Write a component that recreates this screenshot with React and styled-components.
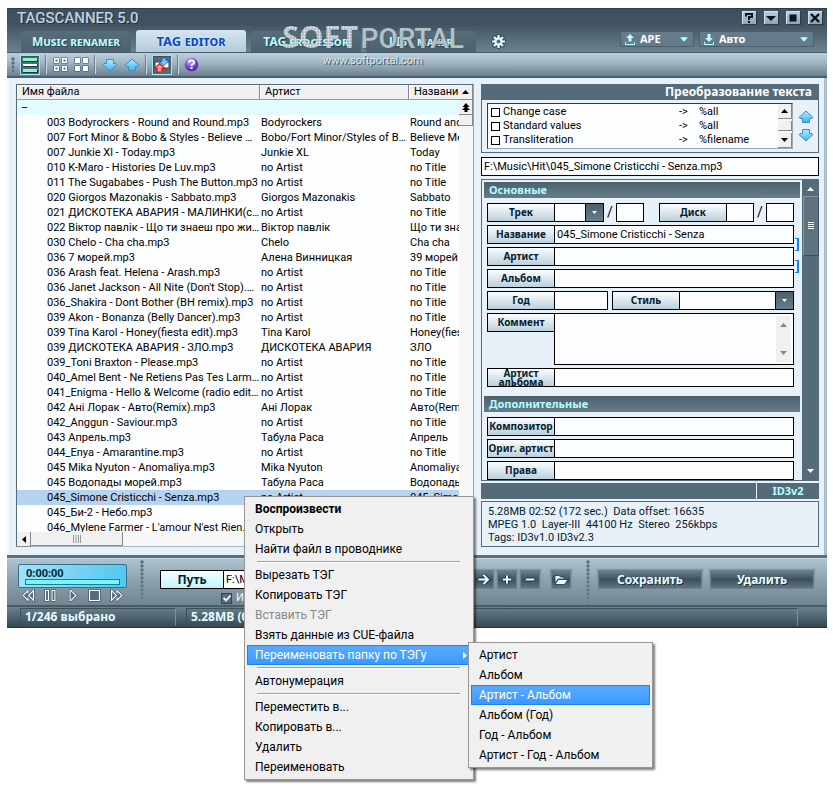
import styled, { createGlobalStyle, css } from 'styled-components'

const uiFont = '"Roboto", "Noto Sans", sans-serif';
const capsFont = '"Noto Sans", "Open Sans", sans-serif';

const slate = '#566b79';
const ice = '#b5ffff';
const paper = '#fbfdff';
const pale = '#e8f0f8';

const GlobalStyle = createGlobalStyle`
  *, *::before, *::after { box-sizing: border-box; }
  body {
    margin: 0;
    background: #fff;
    font-family: ${uiFont};
    font-size: 11px;
    color: #000;
  }
  button, input, select, textarea {
    font: inherit;
    color: inherit;
    margin: 0;
    padding: 0;
    border: none;
    border-radius: 0;
    background: none;
    outline: none;
    appearance: none;
    min-width: 0;
  }
  button { cursor: pointer; }
  svg { display: block; }
`;

const Page = styled.div`
  padding: 8px 6px 0 7px;
  min-height: 793px;
`;

const Window = styled.div`
  position: relative;
  background: ${pale};
`;

/* ---------- title bar and tabs ---------- */

const TitleBar = styled.header`
  display: flex;
  justify-content: space-between;
  height: 45px;
  background: linear-gradient(#3b505d 0, #40535f 35%, #6d8290 100%);
  border-top: 1px solid #2c3c48;
  border-bottom: 1px solid #495d6a;
  padding-left: 11px;
  padding-right: 5px;
`;

const TitleLeft = styled.div`
  display: flex;
  flex-direction: column;
  justify-content: space-between;
`;

const AppName = styled.h1`
  margin: 1px 0 0 -1px;
  font: 500 15px/16px ${uiFont};
  color: #c3d0d9;
  text-shadow: 1px 1px 0 #22323d;
  white-space: nowrap;
`;

const Tabs = styled.nav`
  display: flex;
  align-items: flex-end;
  gap: 5px;
  padding-left: 3px;
`;

const Tab = styled.button`
  width: 110px;
  height: 21px;
  border-radius: 3px 3px 0 0;
  background: linear-gradient(#576c79, #4d616e);
  color: ${ice};
  font: bold 12px/20px ${capsFont};
  font-variant: small-caps;
  text-shadow: 1px 1px 1px #2c3d49;
  white-space: nowrap;

  ${({ $active }) => $active && css`
    height: 22px;
    background: linear-gradient(#d5e5f0, #b4cbd9);
    color: #0a47cf;
    font-size: 13px;
    text-shadow: 0 0 2px #fff;
  `}
`;

const GearButton = styled.button`
  margin: 0 0 3px 10px;
`;

const TitleRight = styled.div`
  display: flex;
  flex-direction: column;
  align-items: flex-end;
`;

const WindowButtons = styled.div`
  display: flex;
  gap: 8px;
  padding-top: 2px;
  margin-bottom: 7px;
`;

const WindowButton = styled.button`
  width: 14px;
  height: 13px;
  display: grid;
  place-items: center;
  background: linear-gradient(#bccdd8, #8fa5b3);
  box-shadow: 1px 1px 1px #2c3c48, inset 1px 1px 0 #d5e1e9;
`;

const FormatPickers = styled.div`
  display: flex;
  gap: 5px;
  margin-right: 8px;
`;

const FormatPicker = styled.label`
  display: flex;
  align-items: center;
  width: ${({ $width }) => $width}px;
  height: 16px;
  padding: 0 5px 0 4px;
  gap: 5px;
  border: 1px solid #4b5f6c;
  border-radius: 2px;
  background: #657b89;
  color: #fff;
  font: bold 11px/14px ${capsFont};
  text-shadow: 1px 1px 0 #364853;

  select {
    flex: 1;
    height: 14px;
  }
  option { color: #000; }
`;

/* ---------- watermark over the tabs ---------- */

const Watermark = styled.div`
  position: absolute;
  left: 275px;
  top: 9px;
  pointer-events: none;
  color: #b2c0c8;
  text-align: center;
`;

const WatermarkName = styled.div`
  display: flex;
  align-items: baseline;
  gap: 2px;
  font: 500 28px/38px ${uiFont};
  text-shadow: 1px 1px 1px #51636f;
`;

const DottedWord = styled.span`
  font: 700 31px/38px ${capsFont};
  color: transparent;
  text-shadow: none;
  background: radial-gradient(circle at center, #cfd9df 0 1px, #7b8d98 2px) 0 0 / 3px 3px;
  background-clip: text;
`;

const WatermarkUrl = styled.div`
  font: 11px/12px ${uiFont};
  color: #dde6ec;
  text-shadow: 1px 1px 0 #44555f;
  margin-top: -3px;
`;

/* ---------- toolbar ---------- */

const Toolbar = styled.div`
  display: flex;
  align-items: center;
  height: 25px;
  padding-left: 4px;
  gap: 5px;
  background: linear-gradient(#b9cfdc, #a3b8c5 40%, #6b818f);
  border-bottom: 2px solid #4a5e6b;
`;

const Grip = styled.span`
  width: 4px;
  align-self: stretch;
  margin: ${({ $inset }) => $inset};
  background: radial-gradient(circle at 2px 2px, #5e7280 1px, #8ba0ae 2px, transparent 2px) 0 0 / 4px 4px;
`;

const ToolButton = styled.button`
  width: ${({ $width }) => $width || 20}px;
  height: 20px;
  display: grid;
  place-items: center;

  ${({ $active }) => $active && css`
    background: ${slate};
    border: 1px solid #9fe7f7;
    box-shadow: inset 1px 1px 1px #3c4f5b;
  `}
`;

const ToolDivider = styled.span`
  width: 2px;
  height: 19px;
  background: #667c8a;
  border-right: 1px solid #c9dce7;
`;

/* ---------- main area ---------- */

const Main = styled.main`
  display: grid;
  grid-template-columns: minmax(0, 1fr) 338px;
  gap: 7px;
  padding: 6px 8px 8px 9px;
  background: ${pale};
  box-shadow: inset -3px 0 0 #a9bfcd, inset 2px 0 0 #f5faff;
`;

const ListPane = styled.section`
  border: 1px solid ${slate};
  border-right-color: #90a8b8;
  border-bottom-color: #a5b9c6;
  background: ${paper};
`;

const ListBody = styled.div`
  display: flex;
  height: 447px;
  overflow: hidden;
`;

const FileTable = styled.table`
  flex: 1;
  min-width: 0;
  width: 100%;
  align-self: flex-start;
  table-layout: fixed;
  border-collapse: separate;
  border-spacing: 0;
  font: 11px/14px ${uiFont};

  th {
    height: 15px;
    padding: 0 0 0 5px;
    background: #f0f0f0;
    border-right: 1px solid #888;
    border-bottom: 1px solid #999;
    box-shadow: inset 1px 1px 0 #fff;
    font-weight: 400;
    text-align: left;
    white-space: nowrap;
    overflow: hidden;
  }
  th:last-child { border-right: none; }

  td {
    height: 15px;
    padding: 1px 1px 0;
    white-space: nowrap;
    overflow: hidden;
    text-overflow: ellipsis;
  }
  td:first-child { padding-left: 30px; padding-right: 0; }
  td:last-child { text-overflow: clip; padding-right: 0; }
`;

const GroupRow = styled.tr`
  background: #e3fbff;

  td:first-child { padding-left: 4px; }
`;

const FileRow = styled.tr`
  background: ${({ $selected }) => ($selected ? '#b5d2ef' : paper)};
`;

const checker = 'repeating-conic-gradient(#f0f0f0 0 25%, #fff 0 50%) 0 0 / 2px 2px';

const ScrollTrack = styled.div`
  width: 14px;
  flex: none;
  background: ${checker};
`;

const ScrollButton = styled.button`
  display: grid;
  place-items: center;
  width: 14px;
  height: ${({ $height }) => $height || 15}px;
  background: #f0f0f0;
  border-right: 1px solid #888;
  border-bottom: 1px solid #888;
`;

const HScroll = styled.div`
  display: flex;
  height: 14px;
  background: ${checker};
`;

const HThumb = styled.span`
  display: grid;
  place-items: center;
  width: 92px;
  background: #f0f0f0;
  border-right: 1px solid #888;
  border-bottom: 1px solid #888;
`;

/* ---------- tag panel ---------- */

const TagPane = styled.section`
  display: flex;
  flex-direction: column;
`;

const PanelTitle = styled.h2`
  margin: 0;
  height: 16px;
  background: ${slate};
  color: #fff;
  font: bold 12px/16px ${capsFont};
  text-align: right;
  padding-right: 7px;
`;

const TransformPanel = styled.div`
  border: 1px solid ${slate};
  border-top: none;
`;

const TransformBody = styled.div`
  display: flex;
  align-items: center;
  gap: 5px;
  padding: 3px 4px 3px 5px;
`;

const TransformList = styled.div`
  flex: 1;
  display: flex;
  justify-content: space-between;
  height: 46px;
  background: ${paper};
  border: 1px solid #2a3a45;
  border-right-color: #97aab7;
  border-bottom-color: #97aab7;
  padding: 1px 0 0 3px;
`;

const TransformRow = styled.label`
  display: grid;
  grid-template-columns: 9px 173px 17px auto;
  column-gap: 3px;
  align-items: center;
  height: 14px;
  line-height: 14px;
`;

const SquareBox = styled.input`
  width: 9px;
  height: 9px;
  border: 1px solid #000;
  background: #fff;
`;

const TransformScroll = styled.div`
  display: flex;
  flex-direction: column;
  justify-content: space-between;
  margin-top: -1px;
  background: ${checker};
`;

const MoveButtons = styled.div`
  display: flex;
  flex-direction: column;
  gap: 4px;
`;

const PathBox = styled.input`
  width: 100%;
  height: 19px;
  margin: 4px 0 3px;
  padding: 0 2px;
  border: 1px solid #000;
  background: ${paper};
`;

const FieldsPanel = styled.div`
  display: flex;
  border: 1px solid ${slate};
  border-right: none;
`;

const FieldsContent = styled.div`
  flex: 1;
  min-width: 0;
  padding: 2px 2px 0;
`;

const SectionTitle = styled.h3`
  margin: 0;
  height: 16px;
  padding-left: 5px;
  background: linear-gradient(#4c606d, #687d8b);
  color: ${ice};
  font: bold 11px/16px ${capsFont};
`;

const Fields = styled.div`
  display: flex;
  flex-direction: column;
  gap: 3px;
  padding: 5px 6px ${({ $last }) => ($last ? 0 : 9)}px 3px;
`;

const FieldRow = styled.div`
  position: relative;
  display: flex;
  justify-content: space-between;
`;

const Field = styled.div`
  display: flex;
  flex: ${({ $width }) => ($width ? `0 0 ${$width}px` : '1')};
`;

const FieldLabel = styled.label`
  flex: none;
  display: grid;
  place-items: center;
  width: 68px;
  height: 19px;
  border: 1px solid #000;
  background: linear-gradient(#fbfdff, #bcd0dc);
  color: #03202f;
  font: bold 10px/${({ $double }) => ($double ? 9 : 17)}px ${capsFont};
  text-align: center;
  white-space: ${({ $double }) => ($double ? 'normal' : 'nowrap')};
`;

const boxed = css`
  flex: 1;
  width: 100%;
  height: 19px;
  border: 1px solid #000;
  background: ${paper};
  padding: 0 2px;
`;

const FieldInput = styled.input`
  ${boxed}
  margin-left: -1px;
`;

const SmallInput = styled.input`
  ${boxed}
  flex: none;
  width: 28px;
`;

const Slash = styled.span`
  width: 12px;
  text-align: center;
  font-size: 14px;
  line-height: 19px;
`;

const SelectBox = styled.div`
  flex: 1;
  display: flex;
  height: 19px;
  margin-left: -1px;
  border: 1px solid #000;
  background: ${paper};

  select { flex: 1; }
`;

const SelectArrow = styled.span`
  display: grid;
  place-items: center;
  width: 18px;
  border-left: 1px solid #000;
  background: linear-gradient(#4c606d, #687d8b);
`;

const CommentBox = styled.div`
  flex: 1;
  display: flex;
  height: 52px;
  margin-left: -1px;
  padding: 2px;
  border: 1px solid #000;
  background: ${paper};

  textarea {
    flex: 1;
    resize: none;
  }
`;

const CommentScroll = styled.div`
  display: flex;
  flex-direction: column;
  justify-content: space-between;
  align-items: center;
  width: 15px;
  padding: 7px 0;
  background: #f0f0f0;
`;

const Bracket = styled.span`
  position: absolute;
  right: -5px;
  top: 13px;
  width: 4px;
  height: 13px;
  border: 1px solid #0a84ff;
  border-right-width: 2px;
  border-left: none;
`;

const FieldsScroll = styled.div`
  display: flex;
  flex-direction: column;
  align-items: center;
  width: 17px;
  background: ${slate};
  padding: 7px 0 7px;
`;

const FieldsThumb = styled.span`
  display: grid;
  place-items: center;
  width: 16px;
  height: 60px;
  margin-top: 5px;
  margin-bottom: auto;
  background: #60747f;
  border: 1px solid #3b4e5a;
  border-top-color: #8296a3;
  border-left-color: #8296a3;
`;

const TagVersion = styled.div`
  display: flex;
  justify-content: flex-end;
  height: 16px;
  margin: 2px 0;
  background: ${slate};
  color: ${ice};
  font: bold 11px/16px ${capsFont};

  span {
    width: 63px;
    border-left: 1px solid #e0f0f8;
    text-align: center;
  }
`;

const FileInfo = styled.div`
  height: 46px;
  border: 1px solid ${slate};
  padding: 3px 6px;
  font: 11px/13px ${uiFont};
  color: #03202f;
  white-space: pre;
`;

/* ---------- footer ---------- */

const Footer = styled.footer`
  display: flex;
  height: 52px;
  padding: 6px 13px 3px 11px;
  border-top: 3px solid #5a6f7d;
  border-bottom: 2px solid #465a67;
  background: linear-gradient(#afc5d2, #8ba0ad 50%, #71858f);
  box-shadow: inset 0 1px 0 #c6dbe7;
`;

const Player = styled.div`
  width: 109px;
`;

const PlayerDisplay = styled.div`
  height: 24px;
  padding: 2px 7px;
  border: 1px solid #3f6e82;
  border-radius: 2px;
  background: linear-gradient(100deg, #9ce6fb, #7bd3f2 50%, #4fc9f3);
  color: #06303f;
  font: bold 11px/12px ${capsFont};
`;

const PlayerProgress = styled.div`
  height: 6px;
  margin: 0 -1px;
  border: 1px solid #16808f;
  background: #7bf4f8;
`;

const PlayerControls = styled.div`
  display: flex;
  justify-content: space-between;
  padding: 1px 4px 0;
`;

const PathGroup = styled.div`
  flex: 1;
  min-width: 0;
`;

const PathLine = styled.div`
  display: flex;
  gap: 3px;
  padding-top: 6px;
`;

const PathButton = styled.button`
  width: 64px;
  height: 19px;
  border: 1px solid #000;
  background: linear-gradient(#f4ffff, #c0f5fa);
  font: bold 12px/17px ${capsFont};
  color: #03202f;
`;

const PathInput = styled.input`
  ${boxed}
  margin-left: -4px;
`;

const UseCheck = styled.label`
  display: flex;
  align-items: center;
  gap: 4px;
  margin: 3px 0 0 61px;
  color: #f3fbff;
  line-height: 12px;
  white-space: nowrap;

  input {
    width: 11px;
    height: 11px;
    border: 1px solid #33454f;
    background: ${slate};
  }
  span { position: relative; display: grid; }
  svg { position: absolute; left: 2px; top: 2px; }
`;

const darkButton = css`
  height: 19px;
  border: 1px solid #6d818e;
  background: linear-gradient(#6b808d, #3c515e 50%, #61747f);
  box-shadow: 0 0 1px 1px #8297a4;
`;

const SquareButton = styled.button`
  ${darkButton}
  display: grid;
  place-items: center;
  flex: none;
  width: 20px;
  margin-left: ${({ $gap }) => $gap || 0}px;
`;

const WideButton = styled.button`
  ${darkButton}
  width: 104px;
  margin: 6px 0 0 8px;
  color: #e9fdff;
  font: bold 12px/17px ${capsFont};
  text-shadow: 1px 1px 0 #22323d;
`;

const StatusBar = styled.div`
  display: flex;
  gap: 10px;
  height: 21px;
  padding: 1px 29px 1px 13px;
  background: linear-gradient(#6b808d, #344854);
  border-bottom: 1px solid #24343e;
`;

const StatusCell = styled.div`
  flex: ${({ $width }) => ($width ? `0 0 ${$width}px` : '1')};
  padding-left: 4px;
  border: 1px solid #3d515d;
  border-right-color: #7b8f9b;
  color: #e9fdff;
  font: bold 12px/16px ${capsFont};
`;

/* ---------- context menus ---------- */

const Menu = styled.ul`
  position: absolute;
  left: ${({ $left }) => $left}px;
  top: ${({ $top }) => $top}px;
  width: ${({ $width }) => $width}px;
  margin: 0;
  padding: 2px;
  list-style: none;
  background: #f0f0f0;
  border: 1px solid #979797;
  box-shadow: 2px 2px 2px rgba(0, 0, 0, 0.5);
`;

const MenuItem = styled.button`
  display: flex;
  align-items: center;
  justify-content: space-between;
  width: 100%;
  height: 20px;
  padding: 0 3px 0 7px;
  border: 1px solid transparent;
  font: ${({ $bold }) => ($bold ? 'bold ' : '')}12px/18px ${uiFont};
  text-align: left;
  white-space: nowrap;

  &:disabled { color: #888; }

  ${({ $active }) => $active && css`
    background: linear-gradient(#5aabff, #3a99ff);
    border-color: #1784f5;
    color: #fff;
  `}
`;

const MenuLine = styled.li`
  height: 6px;
  margin: 0 11px 0 10px;
  border-top: 2px solid transparent;

  &::before {
    content: '';
    display: block;
    height: 2px;
    background: #a0a0a0;
    border-bottom: 1px solid #fff;
  }
`;

const files = [
  ['003 Bodyrockers - Round and Round.mp3', 'Bodyrockers', 'Round and Round'],
  ['007 Fort Minor & Bobo & Styles - Believe Me.mp3', 'Bobo/Fort Minor/Styles of Beyond', 'Believe Me'],
  ['007 Junkie Xl - Today.mp3', 'Junkie XL', 'Today'],
  ['010 K-Maro - Histories De Luv.mp3', 'no Artist', 'no Title'],
  ['011 The Sugababes - Push The Button.mp3', 'no Artist', 'no Title'],
  ['020 Giorgos Mazonakis - Sabbato.mp3', 'Giorgos Mazonakis', 'Sabbato'],
  ['021 ДИСКОТЕКА АВАРИЯ - МАЛИНКИ(cover).mp3', 'no Artist', 'no Title'],
  ['022 Віктор павлік - Що ти знаеш про життя.mp3', 'Віктор павлік', 'Що ти знаеш'],
  ['030 Chelo - Cha cha.mp3', 'Chelo', 'Cha cha'],
  ['036 7 морей.mp3', 'Алена Винницкая', '39 морей'],
  ['036 Arash feat. Helena - Arash.mp3', 'no Artist', 'no Title'],
  ["036 Janet Jackson - All Nite (Don't Stop).mp3", 'no Artist', 'no Title'],
  ['036_Shakira - Dont Bother (BH remix).mp3', 'no Artist', 'no Title'],
  ['039 Akon - Bonanza (Belly Dancer).mp3', 'no Artist', 'no Title'],
  ['039 Tina Karol - Honey(fiesta edit).mp3', 'Tina Karol', 'Honey(fiesta edit)'],
  ['039 ДИСКОТЕКА АВАРИЯ - ЗЛО.mp3', 'ДИСКОТЕКА АВАРИЯ', 'ЗЛО'],
  ['039_Toni Braxton - Please.mp3', 'no Artist', 'no Title'],
  ['040_Amel Bent - Ne Retiens Pas Tes Larmes.mp3', 'no Artist', 'no Title'],
  ['041_Enigma - Hello & Welcome (radio edit).mp3', 'no Artist', 'no Title'],
  ['042 Ані Лорак - Авто(Remix).mp3', 'Ані Лорак', 'Авто(Remix)'],
  ['042_Anggun - Saviour.mp3', 'no Artist', 'no Title'],
  ['043 Апрель.mp3', 'Табула Раса', 'Апрель'],
  ['044_Enya - Amarantine.mp3', 'no Artist', 'no Title'],
  ['045 Mika Nyuton - Anomaliya.mp3', 'Mika Nyuton', 'Anomaliya'],
  ['045 Водопады морей.mp3', 'Табула Раса', 'Водопады морей'],
  ['045_Simone Cristicchi - Senza.mp3', 'no Artist', '045_Simone'],
  ['045_Би-2 - Небо.mp3', '', ''],
  ["046_Mylene Farmer - L'amour N'est Rien...mp3", '', ''],
];
const selectedIndex = 25;

const transforms = [
  ['Change case', '%all'],
  ['Standard values', '%all'],
  ['Transliteration', '%filename'],
];

const menuItems = [
  { text: 'Воспроизвести', bold: true },
  { text: 'Открыть' },
  { text: 'Найти файл в проводнике' },
  null,
  { text: 'Вырезать ТЭГ' },
  { text: 'Копировать ТЭГ' },
  { text: 'Вставить ТЭГ', disabled: true },
  { text: 'Взять данные из CUE-файла' },
  { text: 'Переименовать папку по ТЭГу', active: true, sub: true },
  null,
  { text: 'Автонумерация' },
  null,
  { text: 'Переместить в...' },
  { text: 'Копировать в...' },
  { text: 'Удалить' },
  { text: 'Переименовать' },
];

const subItems = [
  { text: 'Артист' },
  { text: 'Альбом' },
  { text: 'Артист - Альбом', active: true },
  { text: 'Альбом (Год)' },
  { text: 'Год - Альбом' },
  { text: 'Артист - Год - Альбом' },
];

/* ---------- icons ---------- */

const Triangle = ({ dir = 'down', color = '#000', size = 7 }) => {
  const points = {
    up: '0,4 3.5,0 7,4',
    down: '0,0 7,0 3.5,4',
  }[dir];
  return (
    <svg width={size} height={Math.round(size * 0.57)} viewBox="0 0 7 4">
      <polygon points={points} fill={color} />
    </svg>
  );
};

const LeftTriangle = ({ color = '#000' }) => (
  <svg width="4" height="7" viewBox="0 0 4 7"><polygon points="4,0 4,7 0,3.5" fill={color} /></svg>
);

const RightTriangle = ({ color = '#fff' }) => (
  <svg width="4" height="7" viewBox="0 0 4 7"><polygon points="0,0 0,7 4,3.5" fill={color} /></svg>
);

const BlueArrow = ({ up }) => (
  <svg width="16" height="14" viewBox="0 0 16 14">
    <defs>
      <linearGradient id="blueArrow" x1="0" y1="0" x2="0" y2="1">
        <stop offset="0" stopColor="#b4ecff" />
        <stop offset="1" stopColor="#3db4f2" />
      </linearGradient>
    </defs>
    <path
      d={up ? 'M8 1 L15 7.5 L14 8.5 H11.5 V12.5 H4.5 V8.5 H2 L1 7.5 Z' : 'M8 13 L15 6.5 L14 5.5 H11.5 V1.5 H4.5 V5.5 H2 L1 6.5 Z'}
      fill="url(#blueArrow)"
      stroke="#3c8db8"
      strokeWidth="1"
      strokeLinejoin="round"
    />
  </svg>
);

const LinesIcon = () => (
  <svg width="16" height="16" viewBox="0 0 16 16">
    <g fill="#22343f">
      <rect x="1" y="2" width="15" height="3" />
      <rect x="1" y="8" width="15" height="2" />
      <rect x="1" y="13" width="15" height="3" />
    </g>
    <rect x="1" y="1" width="14" height="3" fill="#7dfbc0" />
    <rect x="1" y="7" width="14" height="2" fill="#f4ffff" />
    <rect x="1" y="12" width="14" height="3" fill="#7dfbc0" />
  </svg>
);

const GridIcon = ({ dot }) => (
  <svg width="15" height="15" viewBox="0 0 15 15">
    {[[1, 1], [9, 1], [1, 9], [9, 9]].map(([x, y]) => (
      <g key={`${x}${y}`}>
        <rect x={x - 0.5} y={y - 0.5} width="6" height="6" fill="#3b5163" />
        <rect x={x} y={y} width="5" height="5" fill="#fff" />
        {dot && <rect x={x + 1.5} y={y + 1.5} width="2" height="2" fill="#1c7fd8" />}
      </g>
    ))}
  </svg>
);

const SwapIcon = () => (
  <svg width="16" height="16" viewBox="0 0 16 16">
    <rect x="1" y="5" width="14" height="6" fill="#fff" stroke="#33444f" />
    <path d="M10 8.5 L5 4.5 H8 V1 H12 V3.5 H15.5 Z" fill="#6cc6ff" stroke="#145fa8" strokeWidth=".8" />
    <path d="M5.5 6.5 L11 11.5 H8 V15 H3 V11.5 H.5 Z" fill="#ff9b90" stroke="#d01818" strokeWidth="1.2" />
  </svg>
);

const HelpIcon = () => (
  <svg width="15" height="15" viewBox="0 0 15 15">
    <defs>
      <radialGradient id="help" cx=".4" cy=".25" r=".8">
        <stop offset="0" stopColor="#c9a8ff" />
        <stop offset=".6" stopColor="#7345d3" />
        <stop offset="1" stopColor="#3d1d94" />
      </radialGradient>
    </defs>
    <circle cx="7.5" cy="7.5" r="6.8" fill="url(#help)" />
    <path d="M5 5.6 Q5 3.4 7.5 3.4 T10 5.4 Q10 6.7 8.6 7.3 Q7.5 7.8 7.5 9" fill="none" stroke="#fff" strokeWidth="1.9" />
    <rect x="6.5" y="10" width="2" height="2" fill="#fff" />
  </svg>
);

const GearIcon = () => (
  <svg width="15" height="15" viewBox="0 0 15 15">
    <g stroke="#3a4d5a" strokeWidth="4.2" strokeLinecap="round">
      <path d="M7.5 2 V13 M2 7.5 H13 M3.6 3.6 L11.4 11.4 M11.4 3.6 L3.6 11.4" />
    </g>
    <g stroke="#e3ffff" strokeWidth="2.2">
      <path d="M7.5 1 V14 M1 7.5 H14 M3 3 L12 12 M12 3 L3 12" />
    </g>
    <circle cx="7.5" cy="7.5" r="4.2" fill="#e3ffff" />
    <circle cx="7.5" cy="7.5" r="2" fill="#5b707e" />
  </svg>
);

const TransferIcon = ({ up }) => (
  <svg width="10" height="11" viewBox="0 0 10 11">
    <path d={up ? 'M5 0 L9 4 H6.5 V7.5 H3.5 V4 H1 Z' : 'M5 8 L1 4 H3.5 V0 H6.5 V4 H9 Z'} fill={ice} />
    <path d="M.5 8 V10.5 H9.5 V8" fill="none" stroke={ice} />
  </svg>
);

const CaptionIcon = ({ kind }) => (
  <svg width="10" height="10" viewBox="0 0 10 10">
    {kind === 'help' && (
      <g fill="none" stroke="#02141f" strokeWidth="2">
        <path d="M2 3.5 V1 H8 V4 H5 V7" />
        <path d="M5 8 V10" />
      </g>
    )}
    {kind === 'min' && <polygon points="0,3 10,3 5,8" fill="#02141f" />}
    {kind === 'max' && <rect x="2" y="2" width="6" height="6" fill="#001a3c" stroke="#02141f" />}
    {kind === 'close' && <path d="M1 1 L9 9 M9 1 L1 9" stroke="#02141f" strokeWidth="2.4" />}
  </svg>
);

const playerIcons = {
  Назад: ['M6 1.5 L1 6.5 L6 11.5 V8.5', 'M6 4.5 V1.5', 'M11.5 1.5 L6.5 6.5 L11.5 11.5 Z'],
  Пауза: ['M1.5 1.5 H4.5 V11.5 H1.5 Z', 'M8 1.5 H11 V11.5 H8 Z'],
  Играть: ['M4 1.5 H5 L10 6.5 L5 11.5 H4 Z'],
  Стоп: ['M1.5 1.5 H11.5 V11.5 H1.5 Z'],
  Вперёд: ['M7 1.5 L12 6.5 L7 11.5 V8.5', 'M7 4.5 V1.5', 'M1.5 1.5 L6.5 6.5 L1.5 11.5 Z'],
};

const PlayerIcon = ({ paths }) => (
  <svg width="13" height="13" viewBox="0 0 13 13">
    {paths.map((d) => <path key={`${d}s`} d={d} fill={slate} stroke="#33454f" strokeWidth="2.2" />)}
    {paths.map((d) => <path key={d} d={d} fill={slate} stroke="#f3ffff" strokeWidth="1.1" />)}
  </svg>
);

const ActionIcon = ({ d }) => (
  <svg width="14" height="13" viewBox="0 0 13 13">
    <path d={d} fill="none" stroke="#22323d" strokeWidth="4" />
    <path d={d} fill="none" stroke="#e9ffff" strokeWidth="2" />
  </svg>
);

const FolderIcon = () => (
  <svg width="15" height="12" viewBox="0 0 15 12">
    <path d="M1 1.5 H5 L6.5 3 H10 V5 H4 L1 9.5 Z" fill="#e9ffff" stroke="#22323d" strokeWidth=".8" />
    <path d="M4.3 5.5 H14 L10.5 10.5 H1 Z" fill="#e9ffff" stroke="#22323d" strokeWidth=".8" />
  </svg>
);

function TextField({ id, label, value, double, bracket, width }) {
  return (
    <Field $width={width}>
      <FieldLabel htmlFor={id} $double={double}>{label}</FieldLabel>
      <FieldInput id={id} defaultValue={value} />
      {bracket && <Bracket />}
    </Field>
  );
}

function MenuList({ items, left, top, width, label }) {
  return (
    <Menu $left={left} $top={top} $width={width} aria-label={label}>
      {items.map((item, i) => (
        item ? (
          <li key={item.text}>
            <MenuItem $bold={item.bold} $active={item.active} disabled={item.disabled}>
              {item.text}
              {item.sub && <RightTriangle />}
            </MenuItem>
          </li>
        ) : <MenuLine key={i} />
      ))}
    </Menu>
  );
}

function FileList() {
  return (
    <ListPane>
      <ListBody>
        <FileTable>
          <colgroup>
            <col width="243" />
            <col width="149" />
            <col />
          </colgroup>
          <thead>
            <tr>
              <th>Имя файла</th>
              <th>Артист</th>
              <th>Название</th>
            </tr>
          </thead>
          <tbody>
            <GroupRow><td colSpan={3}>–</td></GroupRow>
            {files.map(([name, artist, title], i) => (
              <FileRow key={name} $selected={i === selectedIndex}>
                <td>{name}</td>
                <td>{artist}</td>
                <td>{title}</td>
              </FileRow>
            ))}
          </tbody>
        </FileTable>
        <ScrollTrack>
          <ScrollButton aria-label="Вверх"><Triangle dir="up" /></ScrollButton>
          <ScrollButton aria-label="В начало">
            <svg width="8" height="9" viewBox="0 0 8 9">
              <path d="M4 0 L7.5 4 H.5 Z M4 3 L8 7 H0 Z M2.5 6 H5.5 V9 H2.5 Z" />
            </svg>
          </ScrollButton>
          <ScrollButton $height={11} aria-label="Прокрутка" />
        </ScrollTrack>
      </ListBody>
      <HScroll>
        <ScrollButton aria-label="Влево"><LeftTriangle /></ScrollButton>
        <HThumb>
          <svg width="8" height="8" viewBox="0 0 8 8">
            <path d="M.5 0 V8 M3 0 V8 M5.5 0 V8 M7.5 0 V8" stroke="#999" />
          </svg>
        </HThumb>
      </HScroll>
    </ListPane>
  );
}

function TagEditor() {
  return (
    <TagPane>
      <PanelTitle>Преобразование текста</PanelTitle>
      <TransformPanel>
        <TransformBody>
          <TransformList>
            <div>
              {transforms.map(([name, target]) => (
                <TransformRow key={name}>
                  <SquareBox type="checkbox" />
                  <span>{name}</span>
                  <span>{'->'}</span>
                  <span>{target}</span>
                </TransformRow>
              ))}
            </div>
            <TransformScroll>
              <ScrollButton aria-label="Вверх"><Triangle dir="up" /></ScrollButton>
              <ScrollButton $height={10} aria-label="Прокрутка" />
              <ScrollButton aria-label="Вниз"><Triangle /></ScrollButton>
            </TransformScroll>
          </TransformList>
          <MoveButtons>
            <button aria-label="Поднять"><BlueArrow up /></button>
            <button aria-label="Опустить"><BlueArrow /></button>
          </MoveButtons>
        </TransformBody>
      </TransformPanel>

      <PathBox aria-label="Файл" defaultValue="F:\Music\Hit\045_Simone Cristicchi - Senza.mp3" />

      <FieldsPanel>
        <FieldsContent>
          <SectionTitle>Основные</SectionTitle>
          <Fields>
            <FieldRow>
              <Field $width={157}>
                <FieldLabel htmlFor="track">Трек</FieldLabel>
                <SelectBox>
                  <select id="track" />
                  <SelectArrow><Triangle color="#fff" size={5} /></SelectArrow>
                </SelectBox>
                <Slash>/</Slash>
                <SmallInput aria-label="Всего треков" />
              </Field>
              <Field $width={135}>
                <TextField id="disc" label="Диск" width={95} />
                <Slash>/</Slash>
                <SmallInput aria-label="Всего дисков" />
              </Field>
            </FieldRow>
            <FieldRow><TextField id="title" label="Название" value="045_Simone Cristicchi - Senza" bracket /></FieldRow>
            <FieldRow><TextField id="artist" label="Артист" bracket /></FieldRow>
            <FieldRow><TextField id="album" label="Альбом" /></FieldRow>
            <FieldRow>
              <TextField id="year" label="Год" width={121} />
              <Field $width={182}>
                <FieldLabel htmlFor="genre">Стиль</FieldLabel>
                <SelectBox>
                  <select id="genre" />
                  <SelectArrow><Triangle color="#fff" size={5} /></SelectArrow>
                </SelectBox>
              </Field>
            </FieldRow>
            <FieldRow>
              <FieldLabel htmlFor="comment">Коммент</FieldLabel>
              <CommentBox>
                <textarea id="comment" />
                <CommentScroll>
                  <Triangle dir="up" color="#888" />
                  <Triangle color="#888" />
                </CommentScroll>
              </CommentBox>
            </FieldRow>
            <FieldRow><TextField id="albumArtist" label="Артист альбома" double /></FieldRow>
          </Fields>
          <SectionTitle>Дополнительные</SectionTitle>
          <Fields $last>
            <FieldRow><TextField id="composer" label="Композитор" /></FieldRow>
            <FieldRow><TextField id="origArtist" label="Ориг. артист" /></FieldRow>
            <FieldRow><TextField id="rights" label="Права" /></FieldRow>
          </Fields>
        </FieldsContent>
        <FieldsScroll>
          <Triangle dir="up" color="#fff" />
          <FieldsThumb>
            <svg width="6" height="8" viewBox="0 0 6 8">
              <path d="M0 .5 H6 M0 2.5 H6 M0 4.5 H6 M0 6.5 H6" stroke="#fff" />
            </svg>
          </FieldsThumb>
          <Triangle color="#fff" />
        </FieldsScroll>
      </FieldsPanel>

      <TagVersion><span>ID3v2</span></TagVersion>
      <FileInfo>
        {'5.28MB 02:52 (172 sec.)  Data offset: 16635\n'}
        {'MPEG 1.0  Layer-III  44100 Hz  Stereo  256kbps\n'}
        {'Tags: ID3v1.0 ID3v2.3'}
      </FileInfo>
    </TagPane>
  );
}

export default function App() {
  return (
    <Page>
      <GlobalStyle />
      <Window>
        <TitleBar>
          <TitleLeft>
            <AppName>TAGSCANNER 5.0</AppName>
            <Tabs>
              <Tab>Music renamer</Tab>
              <Tab $active>TAG editor</Tab>
              <Tab>TAG processor</Tab>
              <Tab>LIST maker</Tab>
              <GearButton aria-label="Настройки"><GearIcon /></GearButton>
            </Tabs>
          </TitleLeft>
          <TitleRight>
            <WindowButtons>
              <WindowButton aria-label="Справка"><CaptionIcon kind="help" /></WindowButton>
              <WindowButton aria-label="Свернуть"><CaptionIcon kind="min" /></WindowButton>
              <WindowButton aria-label="Развернуть"><CaptionIcon kind="max" /></WindowButton>
              <WindowButton aria-label="Закрыть"><CaptionIcon kind="close" /></WindowButton>
            </WindowButtons>
            <FormatPickers>
              <FormatPicker $width={74}>
                <TransferIcon up />
                <select aria-label="Запись"><option>APE</option></select>
                <Triangle color={ice} size={8} />
              </FormatPicker>
              <FormatPicker $width={115}>
                <TransferIcon />
                <select aria-label="Чтение"><option>Авто</option></select>
                <Triangle color={ice} size={8} />
              </FormatPicker>
            </FormatPickers>
          </TitleRight>
        </TitleBar>

        <Toolbar>
          <Grip $inset="4px 0 3px" />
          <ToolButton $active aria-label="Список"><LinesIcon /></ToolButton>
          <ToolDivider />
          <ToolButton $width={16} aria-label="Отметить все"><GridIcon dot /></ToolButton>
          <ToolButton $width={16} aria-label="Снять отметки"><GridIcon /></ToolButton>
          <ToolDivider />
          <ToolButton $width={17} aria-label="Вниз"><BlueArrow /></ToolButton>
          <ToolButton $width={17} aria-label="Вверх"><BlueArrow up /></ToolButton>
          <ToolDivider />
          <ToolButton $active aria-label="Преобразовать"><SwapIcon /></ToolButton>
          <ToolDivider />
          <ToolButton $width={14} aria-label="Помощь"><HelpIcon /></ToolButton>
        </Toolbar>

        <Main>
          <FileList />
          <TagEditor />
        </Main>

        <Footer>
          <Player>
            <PlayerDisplay>
              0:00:00
              <PlayerProgress />
            </PlayerDisplay>
            <PlayerControls>
              {Object.entries(playerIcons).map(([name, paths]) => (
                <button key={name} aria-label={name}><PlayerIcon paths={paths} /></button>
              ))}
            </PlayerControls>
          </Player>
          <Grip $inset="-4px 16px 0 13px" />
          <PathGroup>
            <PathLine>
              <PathButton>Путь</PathButton>
              <PathInput aria-label="Путь" defaultValue="F:\Music\Hit\" />
              <SquareButton aria-label="Перейти"><ActionIcon d="M1 6.5 H10 M6 2 L10.5 6.5 L6 11" /></SquareButton>
              <SquareButton aria-label="Добавить"><ActionIcon d="M2.5 6.5 H10.5 M6.5 2.5 V10.5" /></SquareButton>
              <SquareButton aria-label="Убрать"><ActionIcon d="M2.5 6.5 H10.5" /></SquareButton>
              <SquareButton $gap={8} aria-label="Обзор"><FolderIcon /></SquareButton>
            </PathLine>
            <UseCheck>
              <span>
                <input type="checkbox" defaultChecked />
                <svg width="8" height="7" viewBox="0 0 8 7">
                  <path d="M.5 3 L3 5.5 L7.5 .5" fill="none" stroke="#fff" strokeWidth="1.8" />
                </svg>
              </span>
              Использовать подпапки
            </UseCheck>
          </PathGroup>
          <Grip $inset="-4px 0 0 15px" />
          <WideButton>Сохранить</WideButton>
          <WideButton>Удалить</WideButton>
        </Footer>
        <StatusBar>
          <StatusCell $width={156}>1/246 выбрано</StatusCell>
          <StatusCell>5.28MB (00:02:52)</StatusCell>
        </StatusBar>

        <Watermark>
          <WatermarkName><DottedWord>SOFT</DottedWord>PORTAL</WatermarkName>
          <WatermarkUrl>www.softportal.com</WatermarkUrl>
        </Watermark>

        <MenuList items={menuItems} left={237} top={488} width={230} label="Файл" />
        <MenuList items={subItems} left={461} top={634} width={185} label="Шаблон папки" />
      </Window>
    </Page>
  );
}
